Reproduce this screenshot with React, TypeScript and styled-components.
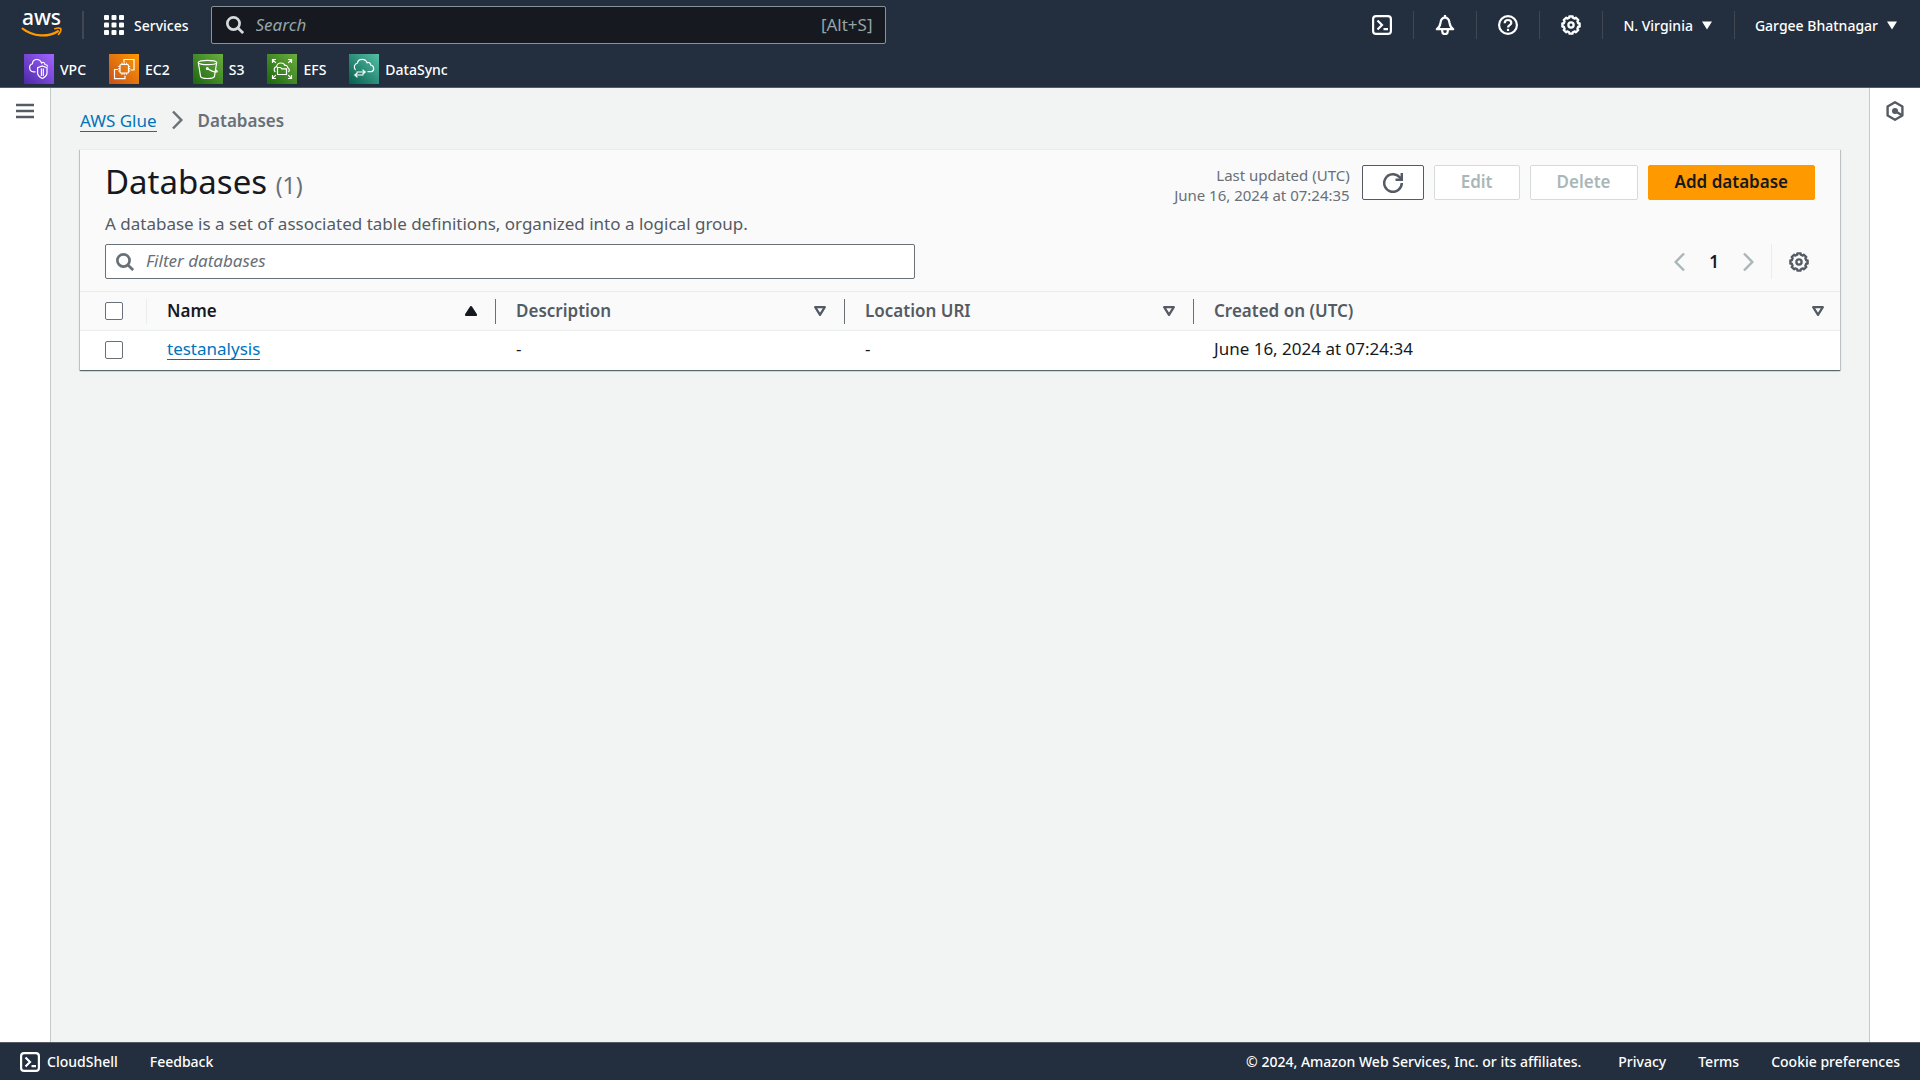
import React from "react";
import styled, { createGlobalStyle } from "styled-components";

const color = {
  nav: "#232f3e",
  navBorder: "#545b64",
  ink: "#16191f",
  text: "#545b64",
  muted: "#687078",
  faint: "#aab7b8",
  line: "#eaeded",
  link: "#0073bb",
  page: "#f2f3f3",
};

const Global = createGlobalStyle`
  *, *::before, *::after { box-sizing: border-box; }
  body { margin: 0; background: ${color.page}; }
  body, button, input {
    font-family: "Noto Sans", "Open Sans", sans-serif;
    font-size: 17px;
    line-height: 21px;
  }
  button { margin: 0; padding: 0; border: 0; background: none; color: inherit; cursor: pointer; }
  svg { display: block; flex: none; }
`;

/* ---------- icons ---------- */

const Stroke = ({ size = 20, width = 2, children }: { size?: number; width?: number; children: React.ReactNode }) => (
  <svg width={size} height={size} viewBox="0 0 20 20" fill="none" stroke="currentColor" strokeWidth={width} aria-hidden="true">
    {children}
  </svg>
);

const gearPath = (() => {
  const points: string[] = [];
  for (let tooth = 0; tooth < 8; tooth++) {
    const mid = (tooth * Math.PI) / 4 - Math.PI / 2;
    for (const [offset, radius] of [[-0.24, 7.4], [-0.19, 8.8], [0.19, 8.8], [0.24, 7.4]]) {
      const x = 10 + Math.cos(mid + offset) * radius;
      const y = 10 + Math.sin(mid + offset) * radius;
      points.push(`${x.toFixed(2)} ${y.toFixed(2)}`);
    }
  }
  return `M${points.join("L")}Z`;
})();

const GearIcon = () => (
  <Stroke width={2.3}>
    <path d={gearPath} strokeLinejoin="round" />
    <circle cx="10" cy="10" r="2.6" />
  </Stroke>
);

const ShellIcon = () => (
  <Stroke width={2.2}>
    <rect x="1.1" y="1.1" width="17.8" height="17.8" rx="3" />
    <path d="M5.5 5.5l4.5 4.5-4.5 4.5M11.5 14.2h4.5" />
  </Stroke>
);

const BellIcon = () => (
  <Stroke width={2.2}>
    <path d="M10 0v3" />
    <path d="M1.8 14.2h16.4c-3.2-2-3.2-4-3.8-7C13.9 4.2 12.3 2.6 10 2.6S6.1 4.2 5.6 7.2c-.6 3-.6 5-3.8 7z" strokeLinejoin="round" />
    <path d="M7.2 15v1.3a2.8 2.8 0 0 0 5.6 0V15" />
  </Stroke>
);

const HelpIcon = () => (
  <Stroke width={2.2}>
    <circle cx="10" cy="10" r="8.9" />
    <path d="M6.7 8.2C6.7 6 8.2 5 10 5s3.3 1.1 3.3 2.9c0 2.1-3.3 2.3-3.3 4.6" />
    <path d="M10 13.8v2.2" />
  </Stroke>
);

const SearchIcon = () => (
  <Stroke size={18} width={3}>
    <circle cx="8.3" cy="8.3" r="6.8" />
    <path d="M13 13l6 6" />
  </Stroke>
);

const RefreshIcon = () => (
  <Stroke width={2.5}>
    <path d="M18.8 10A8.8 8.8 0 1 1 16.6 4.2L18.7 6.5" />
    <path d="M12.5 6.7h6.3V0" />
  </Stroke>
);

const MenuIcon = () => (
  <Stroke width={2.5}>
    <path d="M1 4h18M1 10h18M1 16h18" />
  </Stroke>
);

const HexIcon = () => (
  <Stroke>
    <path d="M10 1.3l7.4 4.2v9L10 18.7l-7.4-4.2v-9z" strokeLinejoin="round" strokeWidth="2.4" />
    <circle cx="10" cy="10" r="3" fill="currentColor" stroke="none" />
    <path d="M10 10l6.5 4" strokeWidth="2.6" />
  </Stroke>
);

const Chevron = ({ back }: { back?: boolean }) => (
  <svg width="11" height="20" viewBox="0 0 11 20" fill="none" stroke="currentColor" strokeWidth="2.5" aria-hidden="true">
    <path d={back ? "M10 1.5L1.7 10l8.3 8.5" : "M1 1.5L9.3 10 1 18.5"} />
  </svg>
);

const Caret = () => (
  <svg width="10" height="9" viewBox="0 0 10 9" fill="currentColor" aria-hidden="true">
    <path d="M0 .5h10L5 8.5z" />
  </svg>
);

const SortIcon = ({ active }: { active?: boolean }) => (
  <svg width="12" height="10" viewBox="0 0 12 10" strokeLinejoin="round" strokeWidth="2.3" stroke="currentColor" fill={active ? "currentColor" : "none"} aria-hidden="true">
    <path d={active ? "M6 1.2L11 8.8H1z" : "M1.2 1.2h9.6L6 8.8z"} />
  </svg>
);

const GridIcon = () => (
  <svg width="20" height="20" viewBox="0 0 20 20" fill="currentColor" aria-hidden="true">
    {[0, 7.5, 15].flatMap((y) => [0, 7.5, 15].map((x) => <rect key={`${x}-${y}`} x={x} y={y} width="5" height="5" rx="1" />))}
  </svg>
);

const AwsLogo = () => (
  <svg width="42" height="50" viewBox="0 0 42 50" aria-label="AWS">
    <text x="20.5" y="25" textAnchor="middle" fill="#fff" fontFamily="Noto Sans, sans-serif" fontSize="21" fontWeight="500">aws</text>
    <path d="M1.6 28.6C12 36.8 27 37.6 37 31.2" fill="none" stroke="#f90" strokeWidth="2.2" strokeLinecap="round" />
    <path d="M33.8 28.8c2.2-.8 5-.9 5.9-.3.6 1.4-.5 4-2.3 6" fill="none" stroke="#f90" strokeWidth="1.6" strokeLinecap="round" />
  </svg>
);

const serviceDrawings: Record<string, React.ReactNode> = {
  VPC: (
    <>
      <path d="M11.5 17.8H9.5a4.1 4.1 0 0 1-1-8C8.3 7 10.3 5.5 12.8 5.5c2.3 0 4 1.3 4.7 3.5 1.3-1.2 3.3-.5 3.5 1.5 1.5.2 2.5.8 2.8 2.2" />
      <path d="M18.3 12l4.7 1.7v5.2c0 2.5-2.1 4.2-4.7 5.6-2.6-1.4-4.7-3.1-4.7-5.6v-5.2z" />
      <path d="M17.4 14.6v7.3M19.3 14.6v7.3" />
    </>
  ),
  EC2: (
    <>
      <path d="M15 8.5v-3h10V16h-3.5M9 15.5H5.5v9.2H16v-3" />
      <rect x="11" y="10.5" width="8.5" height="8.5" rx="1" />
      <path d="M13 10.5V8.8m2.2 1.7V8.8m2.3 1.7V8.8M13 19v1.7m2.2-1.7v1.7m2.3-1.7v1.7M11 12.5H9.3m1.7 2.2H9.3m1.7 2.3H9.3m10.2-4.5h1.7m-1.7 2.2h1.7m-1.7 2.3h1.7" />
    </>
  ),
  S3: (
    <>
      <ellipse cx="14.5" cy="8.5" rx="9.2" ry="2.2" />
      <path d="M5.3 8.5l2.3 14c.3 1 3.3 2 6.9 2s6.6-1 6.9-2l2.3-14" />
      <circle cx="14.3" cy="14.5" r=".9" />
      <path d="M15 14.9c3 1.7 6 3.2 8.5 3.1 1.2-.1.9-1.1-1-2.3" />
    </>
  ),
  EFS: (
    <>
      <path d="M5.5 9V5.5H9M5.5 5.5l3.3 3.3M21 5.5h3.5V9M24.5 5.5l-3.3 3.3M5.5 21v3.5H9M5.5 24.5l3.3-3.3M21 24.5h3.5V21M24.5 24.5l-3.3-3.3" />
      <path d="M8.3 18c-2-1.8-1.3-4.8 1.4-5.3 0-2.2 2-3.7 4.3-3.7 2 0 3.3.9 4 2.5 1.5-.3 2.6.6 2.8 2.2 1.6.7 1.9 3 .7 4.3" />
      <path d="M10.5 20.5v-7h3.2l1 1.3h4.8v5.7z" />
    </>
  ),
  DataSync: (
    <>
      <path d="M6.5 16a4.2 4.2 0 0 1 2-7c.3-2.3 2.2-3.6 4.7-3.6 2.2 0 4.2 1.2 5 3.4 1.6-.8 3.2.2 3.5 2.2 3.8.8 4 5.8.8 6.7h-4" />
      <path d="M7.5 18h8.5M13.5 15.6l2.7 2.4-2.7 2.3M14.5 21H6M8.5 18.7L5.8 21l2.7 2.4" />
    </>
  ),
};

/* ---------- top navigation ---------- */

const Page = styled.div`
  display: flex;
  flex-direction: column;
  min-height: 100vh;
`;

const Header = styled.header`
  background: ${color.nav};
  border-bottom: 1px solid ${color.navBorder};
  color: #fff;
`;

const TopRow = styled.div`
  display: flex;
  align-items: center;
  height: 50px;
  padding: 0 1px 0 21px;
`;

const LogoLink = styled.a`
  display: flex;
`;

const Divider = styled.span<{ $tall?: boolean; $light?: boolean }>`
  flex: none;
  width: 1px;
  height: ${(p) => (p.$tall ? 35 : 28)}px;
  background: ${(p) => (p.$light ? color.line : "#414750")};
`;

const ServicesButton = styled.button`
  display: flex;
  align-items: center;
  gap: 10px;
  margin: 0 22px 0 20px;
  font-size: 14px;
  font-weight: 500;
`;

const LogoDivider = styled(Divider)`
  width: 2px;
  margin-left: 19px;
`;

const TopSearch = styled.label`
  display: flex;
  align-items: center;
  gap: 12px;
  flex: 0 1 675px;
  height: 38px;
  padding: 0 12px 0 14px;
  border: 1px solid #879596;
  border-radius: 2px;
  background: ${color.ink};
  color: #d5dbdb;
`;

const BareInput = styled.input<{ $placeholder: string }>`
  flex: 1;
  min-width: 0;
  padding: 0 0 2px;
  border: 0;
  outline: 0;
  background: none;
  color: inherit;
  &::placeholder { color: ${(p) => p.$placeholder}; font-style: italic; opacity: 1; }
`;

const Shortcut = styled.span`
  padding-bottom: 2px;
  color: #95a5a6;
`;

const Tools = styled.nav`
  display: flex;
  align-items: center;
  margin-left: auto;
`;

const ToolButton = styled.button`
  display: flex;
  align-items: center;
  height: 28px;
  padding: 0 21px;
`;

const MenuButton = styled(ToolButton)`
  gap: 9px;
  padding: 0 22px 0 20px;
  font-size: 14px;
  font-weight: 500;
  white-space: nowrap;
`;

const Favorites = styled.nav`
  display: flex;
  gap: 23px;
  height: 37px;
  padding: 4px 24px 3px;
`;

const Favorite = styled.a`
  display: flex;
  align-items: center;
  gap: 6px;
  color: #fff;
  font-size: 14px;
  font-weight: 500;
  text-decoration: none;
`;

const ServiceTile = styled.span<{ $from: string; $to: string }>`
  width: 30px;
  height: 30px;
  background: linear-gradient(45deg, ${(p) => p.$from}, ${(p) => p.$to});
`;

/* ---------- body ---------- */

const Body = styled.div`
  display: flex;
  flex: 1;
`;

const Rail = styled.aside<{ $side: "left" | "right" }>`
  display: flex;
  flex: none;
  justify-content: center;
  align-items: flex-start;
  width: 51px;
  padding-top: 13px;
  border-${(p) => (p.$side === "left" ? "right" : "left")}: 1px solid #c3cbcb;
  background: #fff;
  color: ${color.text};
`;

const Main = styled.main`
  flex: 1;
  min-width: 0;
  padding: 22px 29px;
`;

const Breadcrumbs = styled.nav`
  display: flex;
  align-items: flex-start;
  gap: 15px;
  height: 22px;
  margin-bottom: 17px;
  color: ${color.muted};
  font-weight: 600;
`;

const Link = styled.a`
  display: inline-block;
  border-bottom: 1px solid currentColor;
  color: ${color.link};
  font-weight: 400;
  text-decoration: none;
`;

const Card = styled.section`
  border-top: 1px solid ${color.line};
  background: #fff;
  box-shadow: 0 1px 1px rgba(0, 28, 36, 0.5), 1px 1px 1px rgba(0, 28, 36, 0.15), -1px 1px 1px rgba(0, 28, 36, 0.15);
`;

const CardHeader = styled.div`
  display: flex;
  flex-direction: column;
  gap: 8px;
  padding: 15px 25px 12px;
  background: #fafafa;
`;

const Spread = styled.div<{ $align: string }>`
  display: flex;
  justify-content: space-between;
  align-items: ${(p) => p.$align};
  gap: 20px;
`;

const Title = styled.h1`
  margin: 0 0 13px;
  color: ${color.ink};
  font-size: 33px;
  font-weight: 400;
  line-height: 33px;
`;

const Count = styled.span`
  color: ${color.muted};
  font-size: 23px;
  line-height: 20px;
`;

const Summary = styled.p`
  margin: 0;
  color: ${color.text};
  line-height: 25px;
`;

const Actions = styled.div`
  display: flex;
  align-items: flex-start;
  gap: 10px;
  white-space: nowrap;
`;

const Updated = styled.div`
  margin-right: 2px;
  color: ${color.muted};
  font-size: 15px;
  line-height: 20px;
  text-align: right;
`;

const Button = styled.button<{ $primary?: boolean }>`
  display: flex;
  align-items: center;
  justify-content: center;
  height: 35px;
  padding: 0 26px 2px;
  border: 1px solid ${(p) => (p.$primary ? "#f90" : color.text)};
  border-radius: 2px;
  background: ${(p) => (p.$primary ? "#f90" : "#fff")};
  color: ${(p) => (p.$primary ? color.ink : color.text)};
  font-weight: 600;
  &:disabled { border-color: #d5dbdb; color: ${color.faint}; cursor: default; }
`;

const IconButton = styled(Button)`
  padding: 0 20px;
`;

const FilterBox = styled.label`
  display: flex;
  align-items: center;
  gap: 12px;
  flex: 0 1 810px;
  height: 35px;
  padding: 0 10px;
  border: 1px solid ${color.muted};
  border-radius: 2px;
  background: #fff;
  color: ${color.muted};
`;

const Pager = styled.nav`
  display: flex;
  align-items: center;
  gap: 17px;
  padding-right: 6px;
  color: ${color.text};
`;

const Pages = styled.div`
  display: flex;
  align-items: center;
  gap: 24px;
`;

const PageButton = styled.button`
  color: ${color.ink};
  font-weight: 600;
  &:disabled { color: ${color.faint}; cursor: default; }
`;

const Table = styled.table`
  width: 100%;
  border-collapse: collapse;
  table-layout: fixed;
`;

const SelectCol = styled.col`
  width: 67px;
`;

const DataCol = styled.col`
  width: 349px;
`;

const Th = styled.th`
  height: 39px;
  padding: 0;
  border-top: 1px solid ${color.line};
  border-bottom: 1px solid ${color.line};
  background: #fafafa;
`;

const HeadCell = styled.div<{ $divider?: string; $active?: boolean }>`
  display: flex;
  align-items: center;
  justify-content: space-between;
  height: 25px;
  padding: 0 ${(p) => (p.$divider ? 18 : 16)}px 0 20px;
  border-right: ${(p) => (p.$divider ? `1px solid ${p.$divider}` : "0")};
  color: ${(p) => (p.$active ? color.ink : color.text)};
  font-weight: 600;
`;

const HeadText = styled.span`
  height: 23px;
`;

const SelectHead = styled(HeadCell)`
  padding-left: 25px;
`;

const Td = styled.td<{ $select?: boolean }>`
  height: 39px;
  padding: ${(p) => (p.$select ? "0 0 0 25px" : "7px 20px 0")};
  color: ${color.ink};
  vertical-align: ${(p) => (p.$select ? "middle" : "top")};
`;

const Checkbox = styled.input`
  appearance: none;
  flex: none;
  display: block;
  width: 18px;
  height: 18px;
  margin: 0;
  border: 1px solid ${color.muted};
  border-radius: 2px;
  background: #fff;
  &:checked { background: ${color.link}; }
`;

/* ---------- footer ---------- */

const Footer = styled.footer`
  display: flex;
  align-items: center;
  gap: 32px;
  height: 38px;
  padding: 0 20px;
  border-top: 1px solid ${color.navBorder};
  background: ${color.nav};
  color: #fff;
  font-size: 14px;
  font-weight: 500;
`;

const FooterLink = styled.a`
  display: flex;
  align-items: center;
  gap: 7px;
  color: inherit;
  text-decoration: none;
`;

const Copyright = styled.span`
  margin: 0 5px 0 auto;
`;

const favorites = [
  { name: "VPC", from: "#4d27a8", to: "#a166ff" },
  { name: "EC2", from: "#c8511b", to: "#ff9900" },
  { name: "S3", from: "#1b660f", to: "#6cae3e" },
  { name: "EFS", from: "#1b660f", to: "#6cae3e" },
  { name: "DataSync", from: "#055f4e", to: "#56c0a7" },
];

const tools = [
  { label: "CloudShell", icon: <ShellIcon /> },
  { label: "Notifications", icon: <BellIcon /> },
  { label: "Help", icon: <HelpIcon /> },
  { label: "Settings", icon: <GearIcon /> },
];

const columns = ["Name", "Description", "Location URI", "Created on (UTC)"];
const databases = [{ name: "testanalysis", description: "-", location: "-", created: "June 16, 2024 at 07:24:34" }];

export default function App() {
  return (
    <Page>
      <Global />
      <Header>
        <TopRow>
          <LogoLink href="#home"><AwsLogo /></LogoLink>
          <LogoDivider />
          <ServicesButton><GridIcon />Services</ServicesButton>
          <TopSearch>
            <SearchIcon />
            <BareInput type="text" placeholder="Search" aria-label="Search" $placeholder="#95a5a6" />
            <Shortcut>[Alt+S]</Shortcut>
          </TopSearch>
          <Tools>
            {tools.map((tool) => (
              <React.Fragment key={tool.label}>
                <ToolButton aria-label={tool.label}>{tool.icon}</ToolButton>
                <Divider />
              </React.Fragment>
            ))}
            <MenuButton>N. Virginia<Caret /></MenuButton>
            <Divider />
            <MenuButton>Gargee Bhatnagar<Caret /></MenuButton>
          </Tools>
        </TopRow>
        <Favorites>
          {favorites.map((item) => (
            <Favorite key={item.name} href={`#${item.name}`}>
              <ServiceTile $from={item.from} $to={item.to}>
                <svg width="30" height="30" viewBox="0 0 30 30" fill="none" stroke="#fff" strokeWidth="1.2" aria-hidden="true">
                  {serviceDrawings[item.name]}
                </svg>
              </ServiceTile>
              {item.name}
            </Favorite>
          ))}
        </Favorites>
      </Header>

      <Body>
        <Rail $side="left">
          <button aria-label="Open navigation"><MenuIcon /></button>
        </Rail>
        <Main>
          <Breadcrumbs>
            <Link href="#glue">AWS Glue</Link>
            <Chevron />
            <span>Databases</span>
          </Breadcrumbs>
          <Card>
            <CardHeader>
              <Spread $align="flex-start">
                <div>
                  <Title>Databases <Count>(1)</Count></Title>
                  <Summary>A database is a set of associated table definitions, organized into a logical group.</Summary>
                </div>
                <Actions>
                  <Updated>Last updated (UTC)<br />June 16, 2024 at 07:24:35</Updated>
                  <IconButton aria-label="Refresh"><RefreshIcon /></IconButton>
                  <Button disabled>Edit</Button>
                  <Button disabled>Delete</Button>
                  <Button $primary>Add database</Button>
                </Actions>
              </Spread>
              <Spread $align="center">
                <FilterBox>
                  <SearchIcon />
                  <BareInput type="text" placeholder="Filter databases" aria-label="Filter databases" $placeholder={color.muted} />
                </FilterBox>
                <Pager>
                  <Pages>
                    <PageButton disabled aria-label="Previous page"><Chevron back /></PageButton>
                    <PageButton>1</PageButton>
                    <PageButton disabled aria-label="Next page"><Chevron /></PageButton>
                  </Pages>
                  <Divider $tall $light />
                  <button aria-label="Preferences"><GearIcon /></button>
                </Pager>
              </Spread>
            </CardHeader>
            <Table>
              <colgroup>
                <SelectCol />
                <DataCol />
                <DataCol />
                <DataCol />
                <col />
              </colgroup>
              <thead>
                <tr>
                  <Th>
                    <SelectHead $divider={color.line}><Checkbox type="checkbox" aria-label="Select all databases" /></SelectHead>
                  </Th>
                  {columns.map((name, i) => (
                    <Th key={name} scope="col">
                      <HeadCell $active={i === 0} $divider={i === columns.length - 1 ? undefined : color.muted}>
                        <HeadText>{name}</HeadText>
                        <SortIcon active={i === 0} />
                      </HeadCell>
                    </Th>
                  ))}
                </tr>
              </thead>
              <tbody>
                {databases.map((db) => (
                  <tr key={db.name}>
                    <Td $select><Checkbox type="checkbox" aria-label={`Select ${db.name}`} /></Td>
                    <Td><Link href="#testanalysis">{db.name}</Link></Td>
                    <Td>{db.description}</Td>
                    <Td>{db.location}</Td>
                    <Td>{db.created}</Td>
                  </tr>
                ))}
              </tbody>
            </Table>
          </Card>
        </Main>
        <Rail $side="right">
          <button aria-label="Open tools"><HexIcon /></button>
        </Rail>
      </Body>

      <Footer>
        <FooterLink href="#cloudshell"><ShellIcon />CloudShell</FooterLink>
        <FooterLink href="#feedback">Feedback</FooterLink>
        <Copyright>© 2024, Amazon Web Services, Inc. or its affiliates.</Copyright>
        <FooterLink href="#privacy">Privacy</FooterLink>
        <FooterLink href="#terms">Terms</FooterLink>
        <FooterLink href="#cookies">Cookie preferences</FooterLink>
      </Footer>
    </Page>
  );
}
